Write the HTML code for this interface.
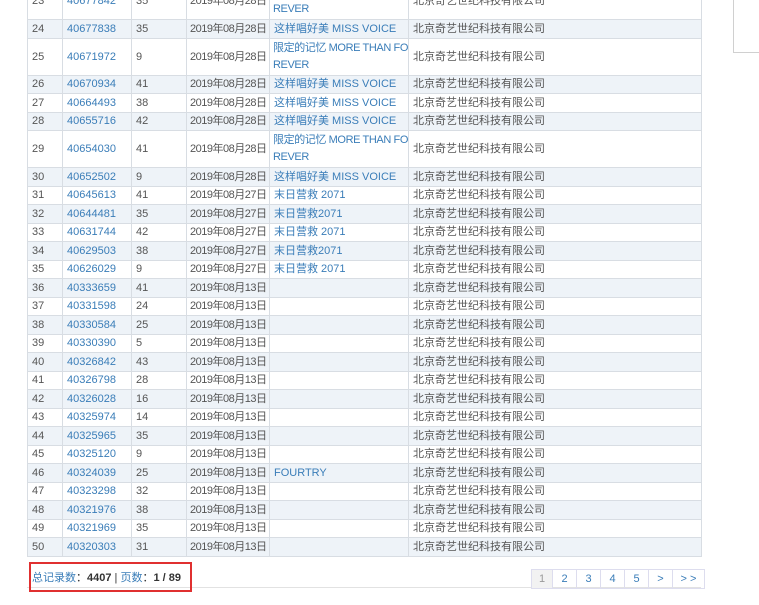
<!DOCTYPE html>
<html><head><meta charset="utf-8"><style>
body{margin:0;width:759px;height:605px;overflow:hidden;background:#fff;position:relative;font-family:"Liberation Sans","Noto Sans CJK SC",sans-serif;font-size:11px;color:#555;}
table{position:absolute;left:27px;top:-18px;border-collapse:collapse;table-layout:fixed;width:674px;}
td{border:1px solid #d8dde3;padding:0 0 0 4px;height:17.5px;line-height:14px;vertical-align:middle;white-space:nowrap;overflow:hidden;}
td.w{white-space:nowrap;line-height:17px;letter-spacing:-0.4px;padding-left:3px;}
td:nth-child(4){padding-left:3px;letter-spacing:-0.5px;}
tr:nth-child(even) td{background:#eef3f8;}
tr.d td{height:36px;}
a{color:#3a7db8;text-decoration:none;}
.side{position:absolute;left:733px;top:-2px;width:40px;height:53px;border:1px solid #d0d0d0;}
.foot{position:absolute;left:27px;top:587px;width:674px;border-top:1px solid #e2e2e2;}
.red{position:absolute;left:29px;top:562px;width:159px;height:26px;border:2px solid #e03030;}
.info{position:absolute;left:32px;top:569px;font-size:11px;color:#333;}
.pg{position:absolute;top:569px;left:531px;display:flex;border:1px solid #dde;}
.pg span{height:18px;line-height:18px;text-align:center;border-left:1px solid #dde;color:#3a7db8;font-size:11px;}
.pg span:first-child{border-left:none;background:#f2f2f2;color:#999;}
</style></head><body>
<div class="side"></div>
<table>
<colgroup><col style="width:35px"><col style="width:69px"><col style="width:55px"><col style="width:83px"><col style="width:139px"><col style="width:293px"></colgroup>
<tr class="d"><td>23</td><td><a>40677842</a></td><td>35</td><td>2019年08月28日</td><td class="w"><a>限定的记忆 MORE THAN FO<br>REVER</a></td><td>北京奇艺世纪科技有限公司</td></tr>
<tr><td>24</td><td><a>40677838</a></td><td>35</td><td>2019年08月28日</td><td><a>这样唱好美 MISS VOICE</a></td><td>北京奇艺世纪科技有限公司</td></tr>
<tr class="d"><td>25</td><td><a>40671972</a></td><td>9</td><td>2019年08月28日</td><td class="w"><a>限定的记忆 MORE THAN FO<br>REVER</a></td><td>北京奇艺世纪科技有限公司</td></tr>
<tr><td>26</td><td><a>40670934</a></td><td>41</td><td>2019年08月28日</td><td><a>这样唱好美 MISS VOICE</a></td><td>北京奇艺世纪科技有限公司</td></tr>
<tr><td>27</td><td><a>40664493</a></td><td>38</td><td>2019年08月28日</td><td><a>这样唱好美 MISS VOICE</a></td><td>北京奇艺世纪科技有限公司</td></tr>
<tr><td>28</td><td><a>40655716</a></td><td>42</td><td>2019年08月28日</td><td><a>这样唱好美 MISS VOICE</a></td><td>北京奇艺世纪科技有限公司</td></tr>
<tr class="d"><td>29</td><td><a>40654030</a></td><td>41</td><td>2019年08月28日</td><td class="w"><a>限定的记忆 MORE THAN FO<br>REVER</a></td><td>北京奇艺世纪科技有限公司</td></tr>
<tr><td>30</td><td><a>40652502</a></td><td>9</td><td>2019年08月28日</td><td><a>这样唱好美 MISS VOICE</a></td><td>北京奇艺世纪科技有限公司</td></tr>
<tr><td>31</td><td><a>40645613</a></td><td>41</td><td>2019年08月27日</td><td><a>末日营救 2071</a></td><td>北京奇艺世纪科技有限公司</td></tr>
<tr><td>32</td><td><a>40644481</a></td><td>35</td><td>2019年08月27日</td><td><a>末日营救2071</a></td><td>北京奇艺世纪科技有限公司</td></tr>
<tr><td>33</td><td><a>40631744</a></td><td>42</td><td>2019年08月27日</td><td><a>末日营救 2071</a></td><td>北京奇艺世纪科技有限公司</td></tr>
<tr><td>34</td><td><a>40629503</a></td><td>38</td><td>2019年08月27日</td><td><a>末日营救2071</a></td><td>北京奇艺世纪科技有限公司</td></tr>
<tr><td>35</td><td><a>40626029</a></td><td>9</td><td>2019年08月27日</td><td><a>末日营救 2071</a></td><td>北京奇艺世纪科技有限公司</td></tr>
<tr><td>36</td><td><a>40333659</a></td><td>41</td><td>2019年08月13日</td><td></td><td>北京奇艺世纪科技有限公司</td></tr>
<tr><td>37</td><td><a>40331598</a></td><td>24</td><td>2019年08月13日</td><td></td><td>北京奇艺世纪科技有限公司</td></tr>
<tr><td>38</td><td><a>40330584</a></td><td>25</td><td>2019年08月13日</td><td></td><td>北京奇艺世纪科技有限公司</td></tr>
<tr><td>39</td><td><a>40330390</a></td><td>5</td><td>2019年08月13日</td><td></td><td>北京奇艺世纪科技有限公司</td></tr>
<tr><td>40</td><td><a>40326842</a></td><td>43</td><td>2019年08月13日</td><td></td><td>北京奇艺世纪科技有限公司</td></tr>
<tr><td>41</td><td><a>40326798</a></td><td>28</td><td>2019年08月13日</td><td></td><td>北京奇艺世纪科技有限公司</td></tr>
<tr><td>42</td><td><a>40326028</a></td><td>16</td><td>2019年08月13日</td><td></td><td>北京奇艺世纪科技有限公司</td></tr>
<tr><td>43</td><td><a>40325974</a></td><td>14</td><td>2019年08月13日</td><td></td><td>北京奇艺世纪科技有限公司</td></tr>
<tr><td>44</td><td><a>40325965</a></td><td>35</td><td>2019年08月13日</td><td></td><td>北京奇艺世纪科技有限公司</td></tr>
<tr><td>45</td><td><a>40325120</a></td><td>9</td><td>2019年08月13日</td><td></td><td>北京奇艺世纪科技有限公司</td></tr>
<tr><td>46</td><td><a>40324039</a></td><td>25</td><td>2019年08月13日</td><td><a>FOURTRY</a></td><td>北京奇艺世纪科技有限公司</td></tr>
<tr><td>47</td><td><a>40323298</a></td><td>32</td><td>2019年08月13日</td><td></td><td>北京奇艺世纪科技有限公司</td></tr>
<tr><td>48</td><td><a>40321976</a></td><td>38</td><td>2019年08月13日</td><td></td><td>北京奇艺世纪科技有限公司</td></tr>
<tr><td>49</td><td><a>40321969</a></td><td>35</td><td>2019年08月13日</td><td></td><td>北京奇艺世纪科技有限公司</td></tr>
<tr><td>50</td><td><a>40320303</a></td><td>31</td><td>2019年08月13日</td><td></td><td>北京奇艺世纪科技有限公司</td></tr>
</table>
<div class="foot"></div>
<div class="red"></div>
<div class="info"><a>总记录数</a>：<b>4407</b> | <a>页数</a>：<b>1 / 89</b></div>
<div class="pg"><span style="width:20px">1</span><span style="width:23px">2</span><span style="width:23px">3</span><span style="width:23px">4</span><span style="width:23px">5</span><span style="width:23px">&gt;</span><span style="width:31px">&gt; &gt;</span></div>
</body></html>
